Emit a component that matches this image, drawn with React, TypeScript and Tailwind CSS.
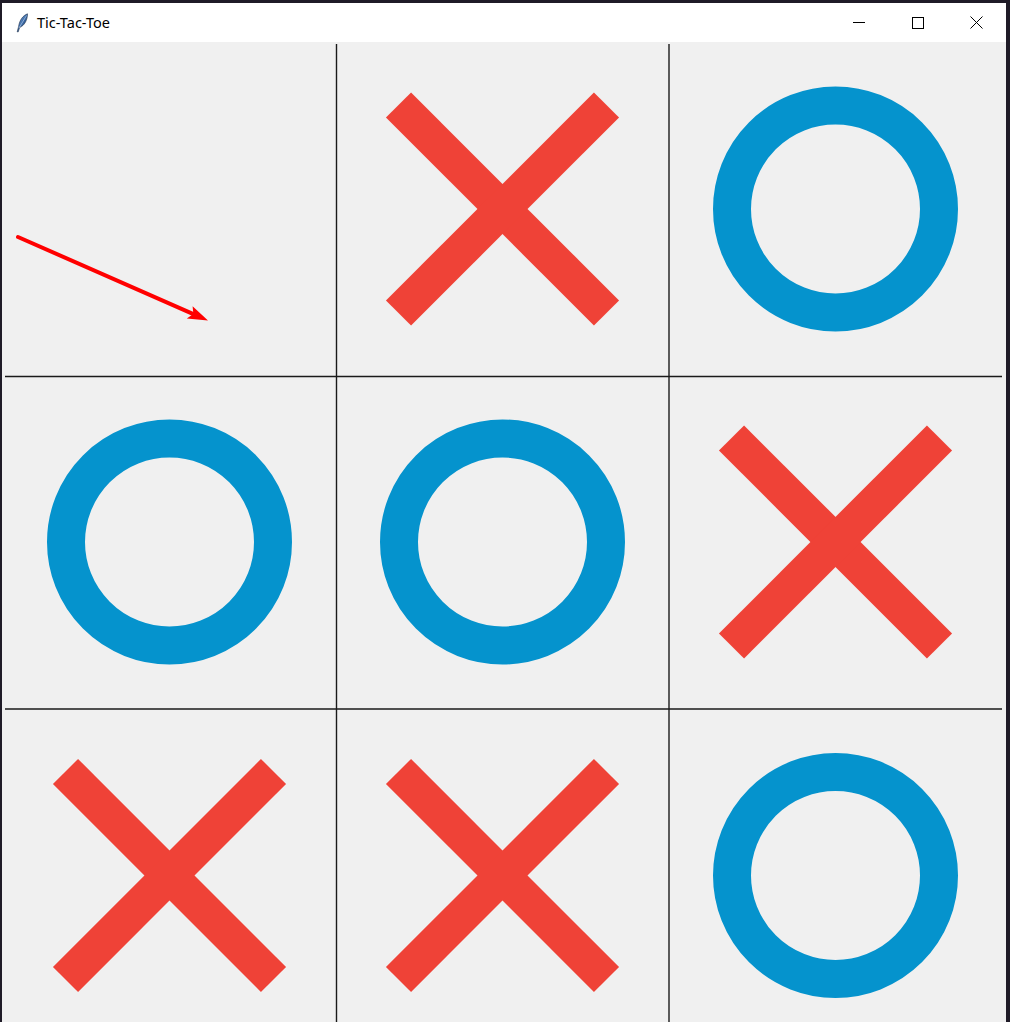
import React from 'react';

const RED = '#ef4237';
const BLUE = '#0593cd';

type Mark = 'X' | 'O' | null;

const board: Mark[][] = [
  [null, 'X', 'O'],
  ['O', 'O', 'X'],
  ['X', 'X', 'O'],
];

// cell centres in page coordinates (the svg viewBox uses page coords)
const COLS = [169.5, 502.5, 835.5];
const ROWS = [209, 542, 875.5];

const XMark = ({ cx, cy }: { cx: number; cy: number }) => {
  const d = 104;
  return (
    <g stroke={RED} strokeWidth={35.5} strokeLinecap="butt">
      <line x1={cx - d} y1={cy - d} x2={cx + d} y2={cy + d} />
      <line x1={cx + d} y1={cy - d} x2={cx - d} y2={cy + d} />
    </g>
  );
};

const OMark = ({ cx, cy }: { cx: number; cy: number }) => (
  <circle cx={cx} cy={cy} r={103.5} fill="none" stroke={BLUE} strokeWidth={38} />
);

const Feather = () => (
  <svg width="14" height="20" viewBox="0 0 14 20">
    <defs>
      <linearGradient id="fq" x1="0" y1="0" x2="1" y2="1">
        <stop offset="0" stopColor="#8fb4e0" />
        <stop offset="0.5" stopColor="#3a6aa8" />
        <stop offset="1" stopColor="#1c2f4f" />
      </linearGradient>
    </defs>
    <path d="M12.5 0.8 C 8 2.5, 4.5 7, 3.6 13.5 L 2.2 18.8 L 3.2 18.9 L 4.6 14.6 C 9.5 12.5, 12.5 7, 12.5 0.8 Z" fill="url(#fq)" stroke="#24344d" strokeWidth="0.6" />
    <path d="M11.5 2.5 L 4 15" stroke="#c8daf0" strokeWidth="0.6" />
  </svg>
);

const TitleBar = () => (
  <div className="h-[39px] bg-white flex items-center shrink-0">
    <div className="w-[35px] flex justify-center pl-[4px]">
      <Feather />
    </div>
    <span className="text-[14.5px] text-black leading-none font-['Noto_Sans','Open_Sans',sans-serif]">Tic-Tac-Toe</span>
    <div className="ml-auto flex h-full">
      <div className="w-[59px] flex items-center justify-center">
        <div className="w-[12px] h-px bg-black" />
      </div>
      <div className="w-[59px] flex items-center justify-center">
        <div className="w-[12px] h-[12px] border border-black" />
      </div>
      <div className="w-[59px] flex items-center justify-center">
        <svg width="13" height="13" viewBox="0 0 13 13">
          <path d="M0.5 0.5 L12.5 12.5 M12.5 0.5 L0.5 12.5" stroke="#000" strokeWidth="1" />
        </svg>
      </div>
    </div>
  </div>
);

// arrow from (18,237) to tip (208,320.5)
const Arrow = () => (
  <g>
    <line x1={18} y1={237} x2={194} y2={314.3} stroke="#ff0000" strokeWidth={4} strokeLinecap="round" />
    <polygon points="208,320.5 186.8,318.6 193.35,314.1 192.6,306.3" fill="#ff0000" />
  </g>
);

export default function App() {
  return (
    <div className="w-[1010px] h-[1022px] bg-[#1f1b27] pt-[3px] pl-[2px] pr-[4px] flex flex-col overflow-hidden">
      <TitleBar />
      <div className="flex-1 bg-[#f0f0f0] overflow-hidden">
        <svg width="1004" height="980" viewBox="2 42 1004 980" className="block">
          {/* grid */}
          <g stroke="#1a1a1a" strokeWidth={1.4}>
            <line x1={336.5} y1={44} x2={336.5} y2={1030} />
            <line x1={669} y1={44} x2={669} y2={1030} />
            <line x1={5} y1={376.5} x2={1002} y2={376.5} />
            <line x1={5} y1={709} x2={1002} y2={709} />
          </g>
          {board.map((row, r) =>
            row.map((m, c) =>
              m === 'X' ? (
                <XMark key={`${r}-${c}`} cx={COLS[c]} cy={ROWS[r]} />
              ) : m === 'O' ? (
                <OMark key={`${r}-${c}`} cx={COLS[c]} cy={ROWS[r]} />
              ) : null
            )
          )}
          <Arrow />
        </svg>
      </div>
    </div>
  );
}
